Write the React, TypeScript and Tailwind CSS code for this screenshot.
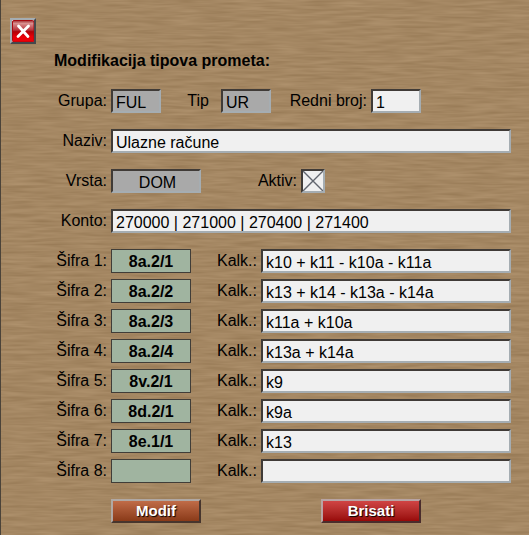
import React from "react";

const sunken =
  "h-6 min-w-0 rounded-none border-2 border-t-[#403b37] border-l-[#403b37] border-b-[#a5adb2] border-r-[#a5adb2] pt-1 pl-[3px] text-black outline-none";

const codes = [
  { code: "8a.2/1", calc: "k10 + k11 - k10a - k11a" },
  { code: "8a.2/2", calc: "k13 + k14 - k13a - k14a" },
  { code: "8a.2/3", calc: "k11a + k10a" },
  { code: "8a.2/4", calc: "k13a + k14a" },
  { code: "8v.2/1", calc: "k9" },
  { code: "8d.2/1", calc: "k9a" },
  { code: "8e.1/1", calc: "k13" },
  { code: "", calc: "" },
];

function Label({ id, width, children }: { id: string; width: string; children: React.ReactNode }) {
  return (
    <label htmlFor={id} className={`${width} shrink-0 pr-1 text-right whitespace-nowrap`}>
      {children}
    </label>
  );
}

function WoodGrain() {
  return (
    <svg className="absolute inset-0 -z-10 h-full w-full" aria-hidden="true">
      <filter id="grain" x="0" y="0" width="100%" height="100%" colorInterpolationFilters="sRGB">
        <feTurbulence type="fractalNoise" baseFrequency="0.03 0.35" numOctaves="2" seed="7" />
        <feColorMatrix
          values="0.12 0 0 0 0.582
                  0.12 0 0 0 0.467
                  0.12 0 0 0 0.324
                  0 0 0 0 1"
        />
      </filter>
      <rect width="100%" height="100%" fill="#a38661" />
      <rect width="100%" height="100%" filter="url(#grain)" />
    </svg>
  );
}

export default function App() {
  return (
    <main className="relative isolate min-h-screen border-l border-[#4b4339] pt-[18px] pr-[18px] pb-3 font-['Liberation_Sans',Arial,sans-serif] text-[16px] leading-6 text-black">
      <WoodGrain />
      <button
        type="button"
        aria-label="Zatvori"
        className="ml-[9px] block size-[26px] border-2 border-t-[#a5adb2] border-l-[#a5adb2] border-r-[#45484c] border-b-[#45484c]"
      >
        <svg viewBox="0 0 22 22" className="block size-full">
          <defs>
            <linearGradient id="red" x1="0" y1="0" x2="0" y2="1">
              <stop offset="0" stopColor="#a02c30" />
              <stop offset="0.14" stopColor="#d89090" />
              <stop offset="0.45" stopColor="#b83038" />
              <stop offset="0.52" stopColor="#b00008" />
              <stop offset="0.75" stopColor="#e80008" />
              <stop offset="1" stopColor="#f00008" />
            </linearGradient>
          </defs>
          <rect width="22" height="22" fill="#e8dcdc" />
          <rect x="0.5" y="0.5" width="21.5" height="21.5" rx="1.5" fill="url(#red)" stroke="#a80810" />
          <path d="M6.5 6 L16 16.5 M16.5 6 L6 16.5" stroke="#fff" strokeWidth="2.8" strokeLinecap="round" />
        </svg>
      </button>

      <h1 className="mt-[5px] ml-[53px] font-bold">Modifikacija tipova prometa:</h1>

      <form className="mt-4" onSubmit={(e) => e.preventDefault()}>
        <div className="flex flex-col gap-4">
          <div className="flex">
            <Label id="grupa" width="w-[110px]">Grupa:</Label>
            <input id="grupa" readOnly defaultValue="FUL" className={`${sunken} w-[50px] bg-[#a9a9a9]`} />
            <label htmlFor="tip" className="w-[60px] shrink-0 pr-3 text-right">Tip</label>
            <input id="tip" readOnly defaultValue="UR" className={`${sunken} w-[50px] bg-[#a9a9a9]`} />
            <Label id="broj" width="w-[100px]">Redni broj:</Label>
            <input id="broj" defaultValue="1" className={`${sunken} w-[50px] bg-[#f0f0f0]`} />
          </div>

          <div className="flex">
            <Label id="naziv" width="w-[110px]">Naziv:</Label>
            <input id="naziv" defaultValue="Ulazne račune" className={`${sunken} flex-1 bg-[#f0f0f0]`} />
          </div>

          <div className="flex">
            <Label id="vrsta" width="w-[110px]">Vrsta:</Label>
            <input id="vrsta" readOnly defaultValue="DOM" className={`${sunken} w-[90px] bg-[#a9a9a9] text-center`} />
            <Label id="aktiv" width="w-[100px]">Aktiv:</Label>
            <span className="relative size-6">
              <input
                id="aktiv"
                type="checkbox"
                defaultChecked
                className="peer block size-6 appearance-none border-2 border-t-[#403b37] border-l-[#403b37] border-r-[#a5adb2] border-b-[#a5adb2] bg-[#f0f0f0]"
              />
              <svg viewBox="0 0 20 20" className="pointer-events-none absolute inset-0.5 hidden size-5 peer-checked:block">
                <path d="M0 0 L20 20 M20 0 L0 20" stroke="#62666f" strokeWidth="1.4" />
              </svg>
            </span>
          </div>

          <div className="flex">
            <Label id="konto" width="w-[110px]">Konto:</Label>
            <input
              id="konto"
              defaultValue="270000 | 271000 | 270400 | 271400"
              className={`${sunken} flex-1 bg-[#f0f0f0]`}
            />
          </div>
        </div>

        <div className="mt-4 flex flex-col gap-1.5">
          {codes.map((row, i) => (
            <div key={i} className="flex">
              <Label id={`sifra${i}`} width="w-[110px]">Šifra {i + 1}:</Label>
              <input
                id={`sifra${i}`}
                defaultValue={row.code}
                className="h-6 w-20 border border-[#403d38] bg-[#a0b4a0] pt-0.5 text-center font-bold outline-none"
              />
              <Label id={`kalk${i}`} width="w-[70px]">Kalk.:</Label>
              <input id={`kalk${i}`} defaultValue={row.calc} className={`${sunken} flex-1 bg-[#f0f0f0]`} />
            </div>
          ))}
        </div>

        <div className="mt-4 ml-[110px] flex gap-[120px]">
          <button
            type="submit"
            className="h-6 w-[90px] border-2 border-t-[#b0a8a4] border-l-[#b0a8a4] border-r-[#47352d] border-b-[#47352d] bg-linear-to-b from-[#c06c48] to-[#8a3a18] text-[15px] leading-5 font-bold text-white text-shadow-[1px_1px_1px_#000]"
          >
            Modif
          </button>
          <button
            type="button"
            className="h-6 w-[100px] border-2 border-t-[#b8a4a4] border-l-[#b8a4a4] border-r-[#4a2c2c] border-b-[#4a2c2c] bg-linear-to-b from-[#d04444] to-[#980808] text-[15px] leading-5 font-bold text-white text-shadow-[1px_1px_1px_#000]"
          >
            Brisati
          </button>
        </div>
      </form>
    </main>
  );
}
